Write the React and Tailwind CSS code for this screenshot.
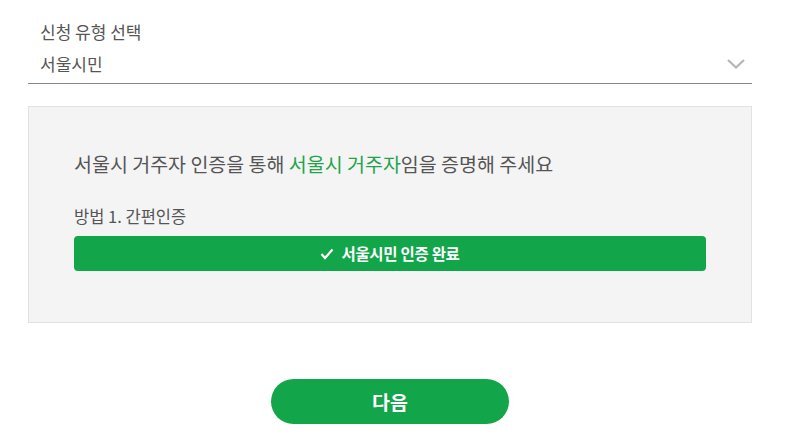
export default function App() {
  const font = { fontFamily: '"Noto Sans CJK KR", "Noto Sans", sans-serif' };
  return (
    <div className="w-[794px] h-[444px] bg-white text-[#555]" style={font}>
      <div className="px-[28px] w-[780px] pt-[20px]">
        <div className="pl-[12px] text-[17px] leading-[24px] text-[#555]">신청 유형 선택</div>
        <div className="flex items-center justify-between border-b border-[#888] pl-[12px] pr-[6px] h-[40px]">
          <span className="text-[17px] leading-[24px] text-[#555]">서울시민</span>
          <svg width="20" height="12" viewBox="0 0 20 12" fill="none" stroke="#b5b5b5" strokeWidth="2.2">
            <polyline points="2 2 10 9.5 18 2" />
          </svg>
        </div>
        <div className="mt-[22px] h-[217px] bg-[#f4f4f4] border border-[#e2e2e2] px-[45px] pt-[43px]">
          <p className="text-[19.5px] leading-[28px] text-[#555]">
            서울시 거주자 인증을 통해 <span className="text-[#23a34c]">서울시 거주자</span>임을 증명해 주세요
          </p>
          <p className="mt-[27px] text-[16.5px] leading-[22px] text-[#555]">방법 1. 간편인증</p>
          <div className="mt-[9px] w-[632px] h-[35px] bg-[#12a54a] rounded-[4px] flex items-center justify-center gap-[7px] text-white">
            <svg width="14" height="12" viewBox="0 0 14 12" fill="none" stroke="white" strokeWidth="2.2">
              <polyline points="1.5 6 5 10 12.5 1.5" />
            </svg>
            <span className="text-[15.5px] font-bold tracking-[-0.3px]">서울시민 인증 완료</span>
          </div>
        </div>
        <div className="flex justify-center mt-[56px]">
          <button className="w-[238px] h-[45px] rounded-full bg-[#12a54a] text-white text-[19.5px] font-bold">다음</button>
        </div>
      </div>
    </div>
  );
}
